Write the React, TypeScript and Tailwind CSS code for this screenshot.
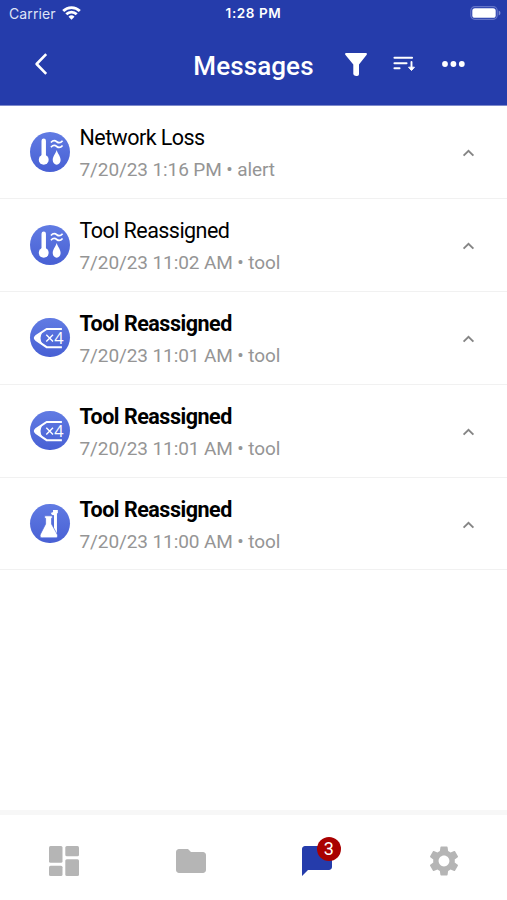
import type { ReactNode } from "react";
import clsx from "clsx";
import { MdChatBubble, MdFolder, MdSettings } from "react-icons/md";

type SensorKind = "climate" | "counter" | "flask";

interface Message {
  id: number;
  title: string;
  date: string;
  category: string;
  icon: SensorKind;
  unread: boolean;
}

const messages: Message[] = [
  { id: 1, title: "Network Loss", date: "7/20/23 1:16 PM", category: "alert", icon: "climate", unread: false },
  { id: 2, title: "Tool Reassigned", date: "7/20/23 11:02 AM", category: "tool", icon: "climate", unread: false },
  { id: 3, title: "Tool Reassigned", date: "7/20/23 11:01 AM", category: "tool", icon: "counter", unread: true },
  { id: 4, title: "Tool Reassigned", date: "7/20/23 11:01 AM", category: "tool", icon: "counter", unread: true },
  { id: 5, title: "Tool Reassigned", date: "7/20/23 11:00 AM", category: "tool", icon: "flask", unread: true },
];

function StatusBar() {
  return (
    <div className="grid h-7 grid-cols-3 items-center text-[14px] leading-none text-white">
      <div className="flex items-center gap-[6px] pl-[9px]">
        <span className="font-['Inter',sans-serif] tracking-[0.1px] text-[#dfe3f6]">Carrier</span>
        <svg className="-mt-[2px]" width="19" height="14" viewBox="0 0 19 14" fill="none" stroke="white" strokeWidth="2.8">
          <path d="M1.2 5a11.8 11.8 0 0 1 16.6 0" />
          <path d="M4.3 8.300a7.400 7.400 0 0 1 10.400 0" />
          <path d="M9.500 13.800 6.500 10.800a4.300 4.300 0 0 1 6 0Z" fill="white" stroke="none" />
        </svg>
      </div>
      <span className="text-center font-['Inter',sans-serif] text-[13.5px] font-semibold tracking-[0.6px]">
        1:28 PM
      </span>
      <div className="flex justify-end pr-[6px]">
        <svg className="-mt-[2px]" width="31" height="14" viewBox="0 0 31 14">
          <rect x="0.8" y="0.7" width="26.4" height="12.6" rx="4" fill="none" stroke="#6474c8" strokeWidth="1.2" />
          <rect x="2.3" y="2.2" width="23.4" height="9.6" rx="2.6" fill="white" />
          <path d="M28.7 4.6q1.8.8 1.8 2.4t-1.8 2.400Z" fill="#7d8bd2" />
        </svg>
      </div>
    </div>
  );
}

function Header() {
  return (
    <header className="h-[106px] border-b border-[#7e8acb] bg-[#253cab] text-white">
      <StatusBar />
      <div className="grid h-[72px] grid-cols-[1fr_auto_1fr] items-center">
        <button className="ml-[34px] w-fit" aria-label="Back">
          <svg width="14" height="22" viewBox="0 0 14 22" fill="none" stroke="white" strokeWidth="2.6">
            <path d="M12.2 1.200 2.600 11l9.600 9.800" strokeLinejoin="round" />
          </svg>
        </button>
        <h1 className="pt-[4px] font-['Roboto',sans-serif] text-[26px] leading-8 font-medium tracking-[0.1px]">
          Messages
        </h1>
        <div className="flex items-center pl-[31px]">
          <svg width="22" height="23" viewBox="0 0 22 23" fill="white">
            <path d="M.7 0h20.600q1 .7.4 1.700L14 11.600v9.700q-.1 1.600-1.800 1.600H11Q8.300 22.900 8.300 21.100V11.600L.3 1.700Q-.3.7.7 0Z" />
          </svg>
          <svg className="ml-[26px]" width="23" height="16" viewBox="0 0 23 16" fill="none" stroke="white" strokeWidth="1.9" strokeLinecap="round">
            <path d="M1.400 1.800h17.700M1.400 7.300h12.200M1.400 12.300h5.200M18.500 6v6" />
            <path d="m15.800 11.500 2.700 3 2.700-3Z" fill="white" strokeWidth="1" strokeLinejoin="round" />
          </svg>
          <svg className="ml-[26px]" width="24" height="6" viewBox="0 0 24 6" fill="white">
            <circle cx="3" cy="3" r="2.9" />
            <circle cx="11.4" cy="3" r="2.9" />
            <circle cx="19.8" cy="3" r="2.9" />
          </svg>
        </div>
      </div>
    </header>
  );
}

function SensorIcon({ kind }: { kind: SensorKind }) {
  return (
    <div className="flex size-[39.5px] shrink-0 items-center justify-center rounded-full bg-linear-to-b from-[#617be3] to-[#4860d4]">
      <svg width="40" height="40" viewBox="0 0 40 40" fill="none" stroke="white">
        {kind === "climate" && (
          <>
            <path d="M13.9 8.600v19" strokeWidth="4.500" strokeLinecap="round" />
            <circle cx="13.900" cy="27.800" r="5" fill="white" stroke="none" />
            <path d="M27 18c1.200 4 4 6.400 4 10.200a4 4.600 0 0 1-8 0C23 24.400 25.800 22 27 18Z" fill="white" stroke="none" />
            <path d="M21.200 10.400q2.900-3.200 5.900-.8t5.900-1M21.200 15.200q2.900-3.200 5.900-.8t5.900-1" strokeWidth="1.700" />
          </>
        )}
        {kind === "counter" && (
          <>
            <path d="M32.300 10.900H16.800L6 18.200q-2.200 1.800 0 3.600l10.800 7.500h15.500" strokeWidth="2.100" strokeLinejoin="round" />
            <path d="M12.300 14.800 5.500 19q-1 1 0 2l6.800 4.500q-3.300-5.300 0-10.700Z" fill="white" stroke="none" />
            <path d="m16.500 16.800 6.800 6.800m0-6.800-6.800 6.800" strokeWidth="1.400" />
            <text x="24.500" y="26" fill="white" stroke="none" fontFamily="Open Sans, sans-serif" fontSize="16.500">
              4
            </text>
          </>
        )}
        {kind === "flask" && (
          <>
            <path d="M21 8.500q3.100.3 2.200-2.700h5v3.200h-.9V29h-3V11q-2.400.4-3.300-2.500Z" fill="white" stroke="none" />
            <path
              d="M14.800 11.700h7.800v2.600h-.8v5.700l5.700 10.300q1.400 3.700-2 3.700H12.600q-3.400 0-2-3.700L15.800 20v-5.700h-1Z"
              fill="white"
              stroke="#556edb"
              strokeWidth="0.7"
            />
          </>
        )}
      </svg>
    </div>
  );
}

function MessageRow({ message }: { message: Message }) {
  return (
    <li className="flex h-[92.9px] items-center border-b-[1.5px] border-[#f1f1f1] pr-[32px] pl-[30px] font-['Roboto',sans-serif]">
      <SensorIcon kind={message.icon} />
      <div className="ml-[10px] flex-1 pt-[5px] whitespace-nowrap">
        <h2
          className={clsx(
            "text-[21.5px] leading-8 text-black",
            message.unread ? "font-bold tracking-[-0.48px]" : "tracking-[-0.55px]"
          )}
        >
          {message.title}
        </h2>
        <p className="text-[19px] leading-8 tracking-[-0.1px] text-[#959595]">
          {message.date} • {message.category}
        </p>
      </div>
      <svg className="mt-[2px]" width="13" height="8" viewBox="0 0 14 9" fill="none" stroke="#858585" strokeWidth="2.100">
        <path d="m1.500 7.500 5.500-5.500 5.500 5.500" />
      </svg>
    </li>
  );
}

function NavItem({ label, children }: { label: string; children: ReactNode }) {
  return (
    <button aria-label={label} className="flex items-center justify-center text-[#b5b5b5]">
      {children}
    </button>
  );
}

function BottomNav({ unread }: { unread: number }) {
  return (
    <nav className="grid h-[90px] grid-cols-4 border-t-5 border-[#f7f7f7] bg-white pt-[6px]">
      <NavItem label="Dashboard">
        <svg className="ml-[2px]" width="30" height="30" viewBox="0 0 30 30" fill="currentColor">
          <rect width="13.5" height="16.7" rx="1.5" />
          <rect y="19.7" width="13.5" height="10.3" rx="1.5" />
          <rect x="16.3" width="13.7" height="10.3" rx="1.5" />
          <rect x="16.3" y="13.3" width="13.7" height="16.7" rx="1.5" />
        </svg>
      </NavItem>
      <NavItem label="Files">
        <MdFolder size={36} className="ml-px" />
      </NavItem>
      <NavItem label="Messages">
        <div className="relative text-[#253cab]">
          <MdChatBubble size={36} />
          <span className="absolute -top-[6px] left-[18px] flex size-[24px] items-center justify-center rounded-full bg-[#a90000] font-['Roboto',sans-serif] text-[18px] leading-none text-white">
            {unread}
          </span>
        </div>
      </NavItem>
      <NavItem label="Settings">
        <MdSettings size={36} />
      </NavItem>
    </nav>
  );
}

export default function App() {
  const unread = messages.filter((m) => m.unread).length;

  return (
    <div className="flex h-screen flex-col overflow-hidden bg-white">
      <Header />
      <ul className="flex-1">
        {messages.map((message) => (
          <MessageRow key={message.id} message={message} />
        ))}
      </ul>
      <BottomNav unread={unread} />
    </div>
  );
}
